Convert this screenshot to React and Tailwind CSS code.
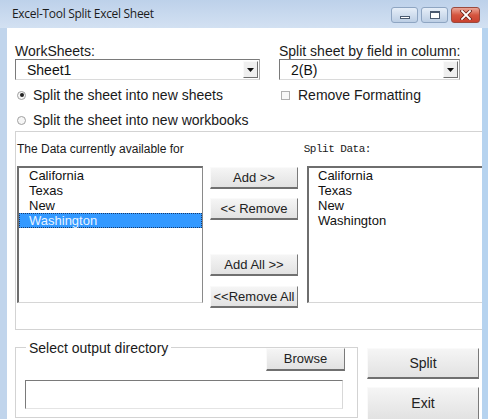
import React from 'react';

const sans = { fontFamily: '"Liberation Sans", Arial, sans-serif' };

function Btn({ children, className = '' }) {
  return (
    <div
      className={`flex items-center justify-center border border-t-[#fafafa] border-l-[#fafafa] border-r-[#7a7a7a] border-b-2 border-b-[#707070] bg-linear-to-b from-[#f5f5f5] to-[#e2e2e2] text-[#222] ${className}`}
    >
      {children}
    </div>
  );
}

function Combo({ value, width }) {
  return (
    <div className={`flex h-[21px] items-center border border-t-[#7a7a7a] border-l-[#7a7a7a] border-r-[#a8a8a8] border-b-[#dadada] bg-white ${width}`}>
      <span className="flex-1 pl-[11px] text-[14px] leading-[16px] text-[#111]">{value}</span>
      <div className="mr-[1px] flex h-[17px] w-[15px] items-center justify-center border border-t-[#fafafa] border-l-[#fafafa] border-r-[#707070] border-b-[#707070] bg-[#efefef]">
        <svg width="7" height="4" viewBox="0 0 7 4">
          <path d="M0 0h7L3.5 4z" fill="#111" />
        </svg>
      </div>
    </div>
  );
}

function Radio({ checked, label }) {
  return (
    <div className="flex h-[16px] items-center">
      <div className="ml-[2px] flex h-[9px] w-[9px] items-center justify-center rounded-full border border-[#a0a0a0] bg-[#f6f6f6]">
        {checked && <div className="h-[4px] w-[4px] rounded-full bg-[#222]" />}
      </div>
      <span className="ml-[7px] text-[14px] leading-[16px] text-[#1a1a1a]">{label}</span>
    </div>
  );
}

const items = ['California', 'Texas', 'New', 'Washington'];

export default function App() {
  return (
    <div className="flex h-[419px] w-[488px] flex-col overflow-hidden bg-[#c3d7ee]" style={sans}>
      {/* Title bar */}
      <div className="flex h-[28px] shrink-0 items-center bg-linear-to-b from-[#bdd1ea] to-[#d3e1f2] pl-[12px] pr-[8px]">
        <span className="text-[12px] leading-[14px] text-[#1c1c1c]" style={{ fontFamily: '"Open Sans", "Liberation Sans", sans-serif', letterSpacing: '-0.3px' }}>
          Excel-Tool Split Excel Sheet
        </span>
        <div className="ml-auto flex items-center gap-[3px] pt-[2px]">
          <div className="flex h-[16px] w-[27px] items-end justify-center rounded-[3px] border border-[#8ea5c2] bg-linear-to-b from-[#e6eef8] to-[#bccee4] pb-[3px]">
            <div className="h-[3px] w-[10px] border border-[#4a5a70] bg-white" />
          </div>
          <div className="flex h-[16px] w-[27px] items-center justify-center rounded-[3px] border border-[#8ea5c2] bg-linear-to-b from-[#e6eef8] to-[#bccee4]">
            <div className="h-[8px] w-[10px] border border-[#4a5a70] border-t-2 bg-white" />
          </div>
          <div className="flex h-[16px] w-[29px] items-center justify-center rounded-[3px] border border-[#9b4a3e] bg-linear-to-b from-[#e9a597] via-[#d5553f] to-[#c9412f]">
            <svg width="12" height="10" viewBox="0 0 12 10">
              <path d="M2 1l8 8M10 1L2 9" stroke="#6b2219" strokeWidth="3.4" strokeLinecap="square" />
              <path d="M2 1l8 8M10 1L2 9" stroke="#fff" strokeWidth="1.8" strokeLinecap="square" />
            </svg>
          </div>
        </div>
      </div>

      <div className="flex flex-1">
        <div className="w-[7px] bg-[#c1d5ec]" />
        {/* Client area */}
        <div className="w-[475px] overflow-hidden bg-white pl-[8px] pt-[16px]">
          <div className="flex">
            <div className="w-[245px] shrink-0">
              <div className="h-[15px] text-[14px] leading-[15px] text-[#1a1a1a]">WorkSheets:</div>
              <Combo value="Sheet1" width="w-[245px]" />
              <div className="mt-[7px]">
                <Radio checked label="Split the sheet into new sheets" />
              </div>
              <div className="mt-[9px]">
                <Radio label="Split the sheet into new workbooks" />
              </div>
            </div>
            <div className="ml-[19px] w-[181px] shrink-0">
              <div className="h-[15px] whitespace-nowrap text-[14px] leading-[15px] text-[#1a1a1a]">Split sheet by field in column:</div>
              <Combo value="2(B)" width="w-[181px]" />
              <div className="mt-[7px] flex h-[16px] items-center">
                <div className="ml-[2px] h-[9px] w-[9px] border border-[#b0b0b0] bg-[#f8f8f8]" />
                <span className="ml-[8px] text-[14px] leading-[16px] text-[#1a1a1a]">Remove Formatting</span>
              </div>
            </div>
          </div>

          {/* Data group */}
          <div className="mt-[3px] h-[199px] w-[480px] border border-[#d3d3d3] pt-[10px]">
            <div className="flex h-[14px] items-center">
              <span className="ml-[1px] text-[12px] leading-[14px] text-[#1a1a1a]">The Data currently available for</span>
              <span
                className="ml-[120px] text-[11px] leading-[14px] tracking-[-0.5px] text-[#1a1a1a]"
                style={{ fontFamily: '"Liberation Mono", "Courier New", monospace' }}
              >
                Split Data:
              </span>
            </div>
            <div className="mt-[10px] flex items-start">
              <div className="ml-[1px] h-[137px] w-[186px] shrink-0 border-t-2 border-l-2 border-r border-b border-t-[#6e6e6e] border-l-[#6e6e6e] border-r-[#8a8a8a] border-b-[#d6d6d6] bg-white">
                {items.map((t, i) => (
                  <div
                    key={t}
                    className={
                      i === 3
                        ? 'h-[15px] border border-dotted border-[#1a3a6a] bg-[#3399ff] pl-[9px] text-[13px] leading-[13px] text-[#eaf4ff]'
                        : 'h-[15px] pl-[10px] text-[13px] leading-[15px] text-[#111]'
                    }
                  >
                    {t}
                  </div>
                ))}
              </div>
              <div className="ml-[7px] flex w-[88px] shrink-0 flex-col text-[13px]">
                <Btn className="mt-[1px] h-[22px]">Add &gt;&gt;</Btn>
                <Btn className="mt-[9px] h-[22px]">&lt;&lt; Remove</Btn>
                <Btn className="mt-[34px] h-[22px]">Add All &gt;&gt;</Btn>
                <Btn className="mt-[10px] h-[22px]">&lt;&lt;Remove All</Btn>
              </div>
              <div className="ml-[9px] h-[137px] w-[200px] shrink-0 border-t-2 border-l-2 border-b border-t-[#6e6e6e] border-l-[#6e6e6e] border-b-[#d6d6d6] bg-white">
                {items.map((t) => (
                  <div key={t} className="h-[15px] pl-[9px] text-[13px] leading-[15px] text-[#111]">
                    {t}
                  </div>
                ))}
              </div>
            </div>
          </div>

          {/* Output directory */}
          <div className="mt-[17px] flex items-start">
            <div className="h-[71px] w-[343px] shrink-0 border border-[#d3d3d3]">
              <div className="flex items-start justify-between pr-[12px]">
                <span className="-mt-[8px] ml-[10px] bg-white px-[3px] text-[14px] leading-[16px] text-[#1a1a1a]">
                  Select output directory
                </span>
                <Btn className="h-[23px] w-[79px] text-[13px]">Browse</Btn>
              </div>
              <div className="ml-[9px] mt-[9px] h-[29px] w-[318px] border border-t-[#7a7a7a] border-l-[#7a7a7a] border-r-[#d8d8d8] border-b-[#e4e4e4] bg-white" />
            </div>
            <div className="ml-[9px] flex w-[112px] shrink-0 flex-col text-[14px]">
              <Btn className="mt-[1px] h-[31px]">Split</Btn>
              <Btn className="mt-[8px] h-[34px]">Exit</Btn>
            </div>
          </div>
        </div>
        <div className="w-[6px] bg-[#b6d3ef]" />
      </div>
    </div>
  );
}
